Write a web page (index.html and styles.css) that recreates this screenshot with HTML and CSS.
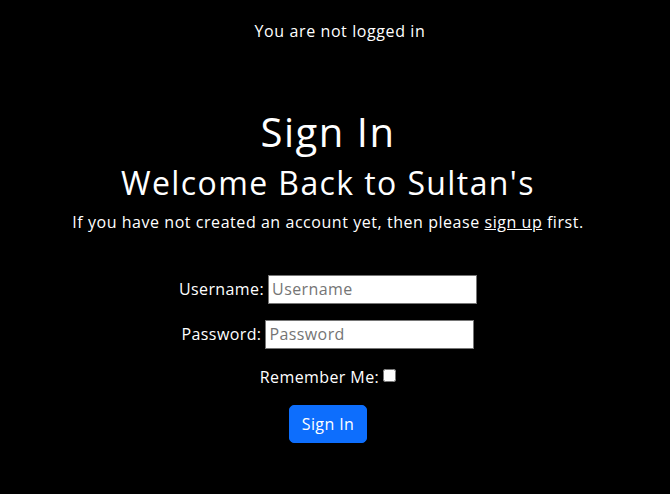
FILE: index.html
```html
<!DOCTYPE html>
<html lang="en">
<head>
<meta charset="utf-8">
<title>Sign In</title>
<link rel="stylesheet" href="styles.css">
</head>
<body>
<p class="status">You are not logged in</p>
<main class="main">
  <h1 class="title">Sign In</h1>
  <h2 class="subtitle">Welcome Back to Sultan's</h2>
  <p class="lead">If you have not created an account yet, then please <a class="link" href="#">sign up</a> first.</p>
  <form class="form">
    <div class="row">
      <label class="label" for="username">Username:</label>
      <input class="field" id="username" type="text" placeholder="Username">
    </div>
    <div class="row">
      <label class="label" for="password">Password:</label>
      <input class="field" id="password" type="password" placeholder="Password">
    </div>
    <div class="row row-check">
      <label class="label" for="remember">Remember Me:</label>
      <input class="check" id="remember" type="checkbox">
    </div>
    <div class="row row-btn">
      <button class="btn" type="submit">Sign In</button>
    </div>
  </form>
</main>
</body>
</html>
```

FILE: styles.css
```css
* { box-sizing: border-box; }

html, body {
  margin: 0;
  background: #000;
  color: #fff;
  font-family: "Open Sans", "DejaVu Sans", sans-serif;
  font-size: 16px;
  line-height: 24px;
}

body {
  display: flex;
  flex-direction: column;
  align-items: center;
}

.status {
  margin: 19px 0 0 0;
  padding-left: 10px;
  align-self: stretch;
  text-align: center;
  letter-spacing: 0.6px;
}

.main {
  align-self: stretch;
  display: flex;
  flex-direction: column;
  align-items: center;
  padding-right: 14px;
  margin-top: 65px;
}

.title {
  margin: 0 0 8px 0;
  font-size: 40px;
  line-height: 48px;
  font-weight: 500;
  letter-spacing: 1.5px;
}

.subtitle {
  margin: 0 0 8px 0;
  font-size: 32px;
  line-height: 38px;
  font-weight: 500;
  letter-spacing: 1.4px;
}

.lead {
  margin: 0 0 16px 0;
  letter-spacing: 0.55px;
}

.link {
  color: #fff;
  text-decoration: underline;
}

.form {
  display: flex;
  flex-direction: column;
  align-items: center;
  padding-top: 25px;
}

.row {
  display: flex;
  align-items: center;
  gap: 4px;
  height: 28px;
  margin-bottom: 17px;
}

.label {
  letter-spacing: 0.4px;
}

.field {
  width: 209px;
  height: 29px;
  padding: 1px 3px;
  border: 1px solid #767676;
  border-radius: 0;
  background: #fff;
  color: #000;
  font-family: inherit;
  font-size: 16px;
  line-height: 24px;
  letter-spacing: 0.4px;
}

.field::placeholder {
  color: #757575;
}

.row-check {
  height: 24px;
  margin-bottom: 16px;
}

.check {
  width: 13px;
  height: 13px;
  margin: 0 0 4px 0;
}

.row-btn {
  height: auto;
}

.btn {
  background: #0d6efd;
  color: #fff;
  border: 1px solid #0d6efd;
  border-radius: 5px;
  padding: 6px 0;
  font-family: inherit;
  font-size: 16px;
  line-height: 24px;
  letter-spacing: 0.4px;
  white-space: nowrap;
  width: 78px;
  height: 38px;
}
```
